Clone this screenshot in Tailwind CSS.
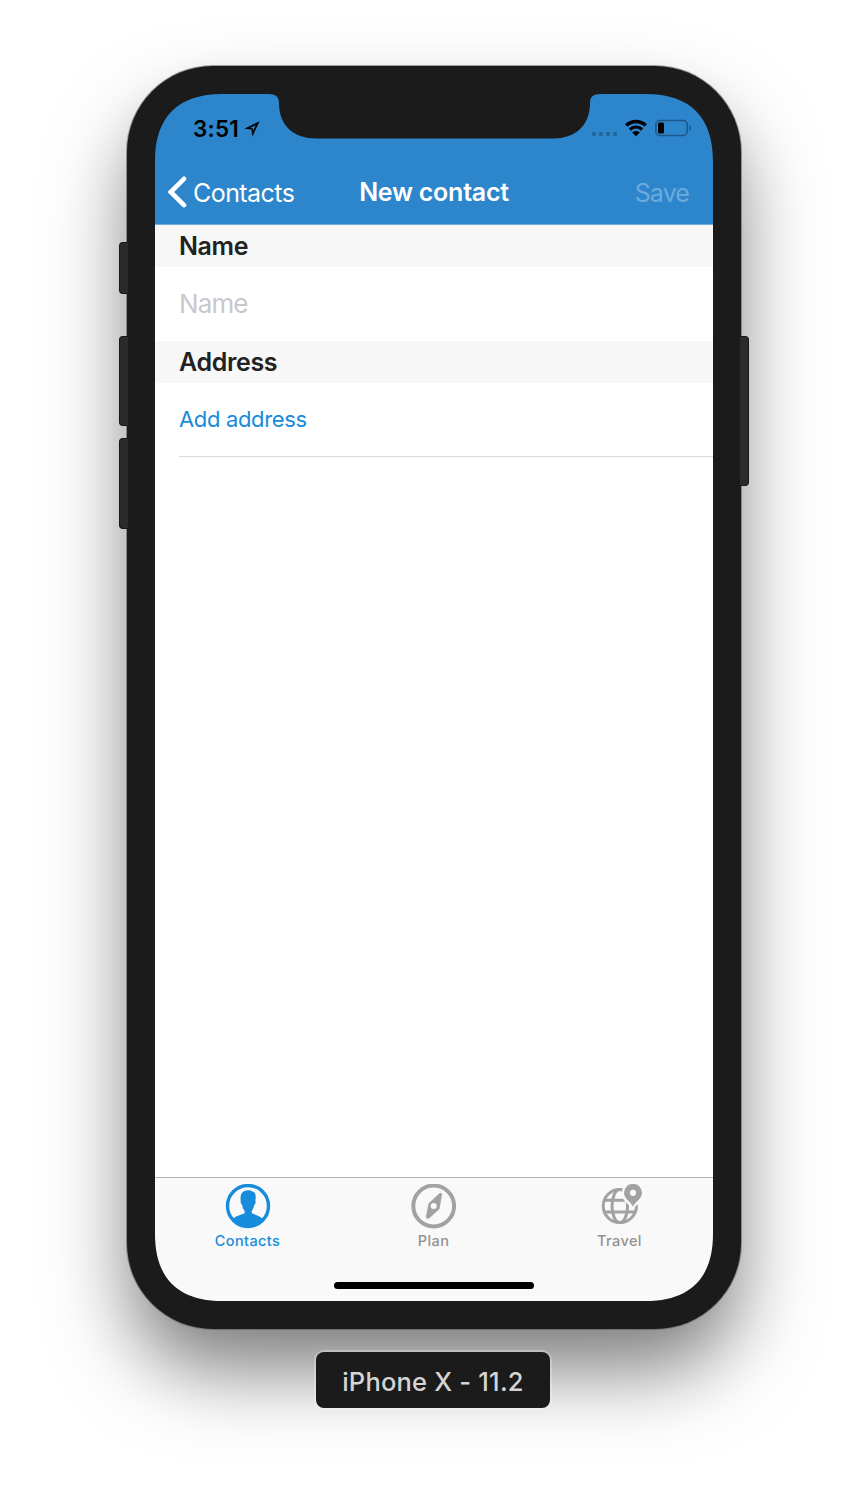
<!DOCTYPE html>
<html lang="en">
<head>
<meta charset="utf-8">
<title>New contact</title>
<script src="https://cdn.jsdelivr.net/npm/@tailwindcss/browser@4"></script>
</head>
<body class="bg-white font-['Inter',sans-serif] antialiased">
<div class="w-[868px] h-[1492px] overflow-hidden flex flex-col items-center pt-[66px]">
  <div class="relative w-[614px] h-[1263px] shrink-0 rounded-[86px] bg-[#1b1b1b] p-[28px] shadow-[0_0_0_1px_rgba(90,90,90,0.55),0_44px_80px_-4px_rgba(0,0,0,0.52)]">
    <!-- side buttons -->
    <div class="absolute left-[-8px] top-[176px] w-[9px] h-[52px] rounded-l-[4px] bg-[#2b2b2b] border border-[#181818] border-r-0"></div>
    <div class="absolute left-[-8px] top-[270px] w-[9px] h-[90px] rounded-l-[4px] bg-[#2b2b2b] border border-[#181818] border-r-0"></div>
    <div class="absolute left-[-8px] top-[372px] w-[9px] h-[91px] rounded-l-[4px] bg-[#2b2b2b] border border-[#181818] border-r-0"></div>
    <div class="absolute right-[-8px] top-[270px] w-[9px] h-[150px] rounded-r-[4px] bg-[#2b2b2b] border border-[#181818] border-l-0"></div>

    <div class="w-[558px] h-[1207px] rounded-[50px] overflow-hidden bg-white flex flex-col">
      <header class="h-[131px] shrink-0 bg-[#2d85cc] border-b border-[#73aedd] flex flex-col">
        <div class="h-[66px] flex items-center justify-between pl-[38px] pr-[21px] pt-[3px]">
          <div class="flex items-center gap-[5px]">
            <span class="text-[22.5px] leading-[28px] font-semibold text-black tracking-[0.2px]">3:51</span>
            <svg width="16" height="16" viewBox="0 0 16 16"><path fill="#000" fill-rule="evenodd" d="M15.500 0.300 L0.300 7.700 L7.500 8.500 L8.300 15.700 Z M11.800 4.200 L9 10 L8.800 7.200 L6 7 Z"/></svg>
          </div>
          <svg width="100" height="20" viewBox="0 0 100 20">
            <g fill="#236698"><rect x="0" y="13" width="4" height="4" rx="1"/><rect x="7" y="13" width="4" height="4" rx="1"/><rect x="14" y="13" width="4" height="4" rx="1"/><rect x="21" y="13" width="4" height="4" rx="1"/></g>
            <g fill="none" stroke="#000" stroke-width="3.500"><path d="M34.2 6.500 A14 14 0 0 1 53.8 6.500"/><path d="M37.9 10.500 A8.700 8.700 0 0 1 50.100 10.500" stroke-width="3.200"/></g>
            <path d="M40.200 13.500 Q44 10.700 47.800 13.500 L44 17.200 Z"/>
            <rect x="63.800" y="1.500" width="31.400" height="15" rx="4" fill="none" stroke="#1d5889" stroke-width="1.500"/>
            <rect x="66" y="3.500" width="6" height="11" rx="1.600"/>
            <path fill="#1d5889" d="M97.200 6 Q99.400 7 99.400 9 Q99.400 11 97.200 12Z"/>
          </svg>
        </div>
        <nav class="h-[64px] flex items-center justify-between pl-[12px] pr-[24px] text-white">
          <div class="w-[160px] flex items-center gap-[5px]">
            <svg width="21" height="32" viewBox="0 0 21 32"><path d="M17 2.800 L3.700 16 L17 29.200" fill="none" stroke="#fff" stroke-width="4.600" stroke-linecap="round" stroke-linejoin="miter"/></svg>
            <span class="text-[25px] leading-[36px] tracking-[-0.55px] pt-[2px]">Contacts</span>
          </div>
          <span class="text-[25px] font-semibold tracking-[-0.25px] pt-[2px] -ml-[8px]">New contact</span>
          <span class="w-[140px] text-right text-[25px] leading-[36px] tracking-[-0.9px] pt-[2px] text-[#6caadc]">Save</span>
        </nav>
      </header>
      <main class="flex-1 flex flex-col text-[25px]">
        <h2 class="h-[42px] bg-[#f7f7f7] pl-[24px] pt-[2px] flex items-center font-semibold text-[#222] tracking-[-0.4px]">Name</h2>
        <div class="h-[74px] pl-[24px] pb-[2px] flex items-center text-[26px] tracking-[-0.9px] text-[#c7c7cd]">Name</div>
        <h2 class="h-[42px] bg-[#f7f7f7] pl-[24px] pt-[2px] flex items-center font-semibold text-[#222] tracking-[-0.35px]">Address</h2>
        <div class="h-[74px] ml-[24px] flex items-center border-b border-[#d9d9db] text-[22px] tracking-[-0.35px] text-[#178bdc]">Add address</div>
      </main>
      <footer class="h-[124px] shrink-0 bg-[#f9f9f9] border-t border-[#b5b5b5] flex flex-col items-center justify-between pb-[12px]">
        <div class="w-full grid grid-cols-3 pt-[6px] text-[14.500px] leading-[18px] font-medium tracking-[0.4px] text-[#929292]">
          <div class="flex flex-col items-center gap-[3px] text-[#178bdc]">
            <svg width="46" height="45" viewBox="0 0 46 45"><circle cx="23" cy="22" r="20.500" fill="none" stroke="#178bdc" stroke-width="3.400"/><path fill="#178bdc" d="M7.500 36 C9 32.500 15 31.200 18.500 29.800 C20 29.200 20 28 19.300 26.500 C17.800 24.500 17.500 22.500 17 20.500 C15.500 19.500 15.600 17.500 15.700 16.500 C15 11 16.500 8 20 6.800 C23 5.700 26 6.300 27.300 7.500 C30.500 8 31.200 11 30.400 16.500 C31 18 30.500 20 29.300 20.700 C28.900 23 28.200 25 27 26.500 C26.300 28 26.500 29.200 28 29.800 C31 31.200 37 32.500 38.500 36 C30 45 16 45 7.500 36Z"/></svg>
            <span class="-ml-px">Contacts</span>
          </div>
          <div class="flex flex-col items-center gap-[3px]">
            <svg width="46" height="45" viewBox="0 0 46 45"><circle cx="22.700" cy="22" r="20.400" fill="none" stroke="#a2a2a2" stroke-width="4"/><path fill="#a2a2a2" fill-rule="evenodd" d="M28.200 9.600 C29.200 8.600 31.300 9 31 11 L28.700 24 Q28.500 25 27.800 25.800 L18.500 34 C17 35.300 14.700 34.500 15 32.600 L17.300 20.500 Q17.500 19.500 18.200 18.700Z M22.700 19 A3 3 0 1 0 22.700 25 A3 3 0 1 0 22.700 19Z"/></svg>
            <span class="-ml-px">Plan</span>
          </div>
          <div class="flex flex-col items-center gap-[3px]">
            <svg width="46" height="45" viewBox="0 0 46 45"><g fill="none" stroke="#a2a2a2" stroke-width="3"><circle cx="22.800" cy="22" r="16.600"/><ellipse cx="22.800" cy="22" rx="7.800" ry="16.600"/><path d="M8 16.200H38M8 28H38"/></g><path d="M36 25.500 C33 20.500 24.800 18 24.800 8.800 A11.200 11.200 0 0 1 47.200 8.800 C47.200 18 39 20.500 36 25.500Z" fill="#f9f9f9"/><path d="M36 22.500 C33.500 17.500 27 15 27 8.800 A9 9 0 0 1 45 8.800 C45 15 38.500 17.500 36 22.500Z" fill="#a2a2a2"/><circle cx="36" cy="8.800" r="3.100" fill="#f9f9f9"/></svg>
            <span class="-ml-px">Travel</span>
          </div>
        </div>
        <div class="w-[200px] h-[7px] rounded-full bg-black"></div>
      </footer>
    </div>

    <!-- bezel corners and notch -->
    <svg class="absolute left-0 top-0" width="614" height="1263" viewBox="127 66 614 1263" fill="#1b1b1b">
      <path d="M154 93 H222 V94 C178 94 155 117 155 161 H154Z"/>
      <path d="M714 93 H646 V94 C690 94 713 117 713 161 H714Z"/>
      <path d="M154 1302 H222 V1301 C178 1301 155 1278 155 1234 H154Z"/>
      <path d="M714 1302 H646 V1301 C690 1301 713 1278 713 1234 H714Z"/>
      <path d="M268 93 H601 V94 C593 94 590 97 590 103 C590 125 576 138.500 553 138.500 H316 C293 138.500 279 125 279 103 C279 97 276 94 268 94Z"/>
    </svg>
  </div>

  <div class="relative mt-[23px] -ml-[2px] w-[234px] h-[56px] shrink-0 rounded-[8px] bg-[#1b1b1b] shadow-[0_0_0_2px_rgba(255,255,255,0.28)] flex items-center justify-center text-[25.500px] font-medium tracking-[0.2px] pt-[4px] text-[#d4d4d4]">iPhone X - 11.2</div>
</div>
</body>
</html>
